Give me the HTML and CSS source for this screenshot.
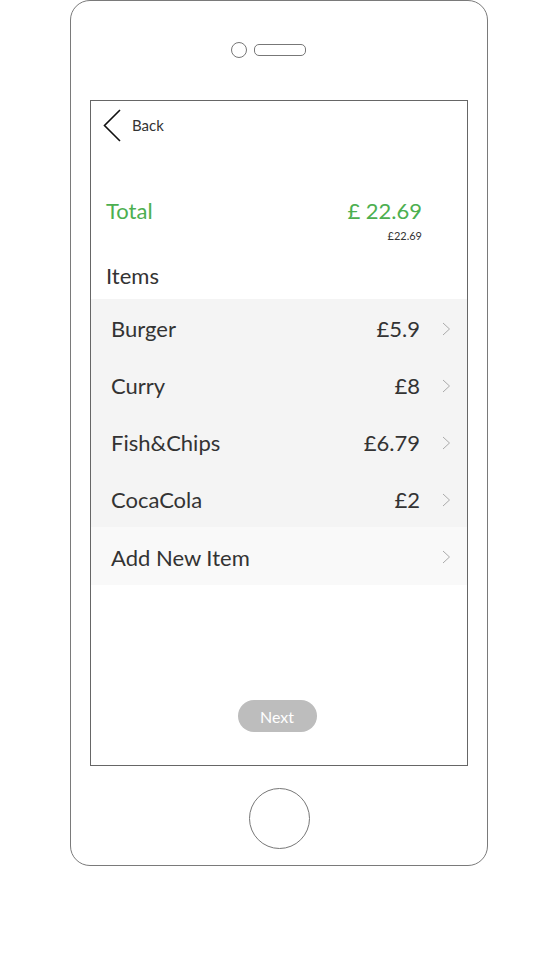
FILE: index.html
```html
<!DOCTYPE html>
<html>
<head>
<meta charset="utf-8">
<link rel="stylesheet" href="styles.css">
</head>
<body>
<div class="phone">
  <div class="sensors">
    <span class="camera"></span>
    <span class="speaker"></span>
  </div>
  <div class="screen">
    <div class="topbar">
      <svg class="back-icon" width="20" height="34" viewBox="0 0 20 34"><path d="M17 1 L1.5 16.5 L17 32" fill="none" stroke="#111" stroke-width="1.6"/></svg>
      <span class="back-label">Back</span>
    </div>
    <div class="total">
      <div class="total-line"><span>Total</span><span>£ 22.69</span></div>
      <div class="total-sub">£22.69</div>
    </div>
    <div class="items-title">Items</div>
    <div class="list">
      <div class="row"><span class="name">Burger</span><span class="price">£5.9</span><svg class="chev" width="9" height="14" viewBox="0 0 9 14"><path d="M1 1 L7.5 7 L1 13" fill="none" stroke="#aaa" stroke-width="1"/></svg></div>
      <div class="row"><span class="name">Curry</span><span class="price">£8</span><svg class="chev" width="9" height="14" viewBox="0 0 9 14"><path d="M1 1 L7.5 7 L1 13" fill="none" stroke="#aaa" stroke-width="1"/></svg></div>
      <div class="row"><span class="name">Fish&amp;Chips</span><span class="price">£6.79</span><svg class="chev" width="9" height="14" viewBox="0 0 9 14"><path d="M1 1 L7.5 7 L1 13" fill="none" stroke="#aaa" stroke-width="1"/></svg></div>
      <div class="row"><span class="name">CocaCola</span><span class="price">£2</span><svg class="chev" width="9" height="14" viewBox="0 0 9 14"><path d="M1 1 L7.5 7 L1 13" fill="none" stroke="#aaa" stroke-width="1"/></svg></div>
      <div class="row add"><span class="name">Add New Item</span><svg class="chev" width="9" height="14" viewBox="0 0 9 14"><path d="M1 1 L7.5 7 L1 13" fill="none" stroke="#aaa" stroke-width="1"/></svg></div>
    </div>
    <div class="next-wrap"><button class="next">Next</button></div>
  </div>
  <div class="home"></div>
</div>
</body>
</html>
```
FILE: styles.css
```css
* { box-sizing: border-box; }
body {
  margin: 0;
  background: #fff;
  font-family: "Source Sans Pro", Lato, "Noto Sans", sans-serif;
}
.phone {
  margin-left: 70px;
  width: 418px;
  height: 866px;
  border: 1px solid #7a7a7a;
  border-radius: 20px;
  display: flex;
  flex-direction: column;
  align-items: center;
}
.sensors {
  margin-top: 41px;
  height: 15px;
  display: flex;
  align-items: center;
  gap: 7px;
  margin-right: 21px;
}
.camera {
  width: 16px;
  height: 16px;
  border: 1px solid #777;
  border-radius: 50%;
}
.speaker {
  width: 52px;
  height: 12px;
  border: 1px solid #777;
  border-radius: 5px;
}
.screen {
  margin-top: 43px;
  width: 378px;
  height: 666px;
  border: 1px solid #666;
  display: flex;
  flex-direction: column;
}
.topbar {
  height: 50px;
  padding-left: 12px;
  display: flex;
  align-items: center;
}
.back-icon { display: block; }
.back-label {
  margin-left: 9px;
  margin-bottom: 2px;
  font-size: 15px;
  color: #333;
}
.total {
  margin-top: 46px;
  padding: 0 45px 0 15px;
}
.total-line {
  display: flex;
  justify-content: space-between;
  font-size: 22px;
  line-height: 28px;
  color: #4caf50;
}
.total-sub {
  margin-top: 4px;
  text-align: right;
  font-size: 11px;
  line-height: 14px;
  color: #333;
}
.items-title {
  margin-top: 19px;
  padding-left: 15px;
  font-size: 22px;
  line-height: 28px;
  color: #333;
}
.list {
  margin-top: 9px;
}
.row {
  height: 57px;
  display: flex;
  align-items: center;
  padding: 2px 16px 0 20px;
  background: #f4f4f4;
  color: #333;
  font-size: 22px;
}
.row.add {
  height: 58px;
  background: #f9f9f9;
}
.name { flex: 1; }
.price { margin-right: 22px; }
.chev { display: block; }
.next-wrap {
  margin-top: 115px;
  display: flex;
  justify-content: center;
  padding-right: 4px;
}
.next {
  width: 79px;
  height: 32px;
  border: none;
  border-radius: 16px;
  background: #bdbdbd;
  color: #fff;
  font-family: inherit;
  font-size: 16px;
}
.home {
  margin-top: 22px;
  width: 61px;
  height: 61px;
  border: 1px solid #777;
  border-radius: 50%;
}
```
